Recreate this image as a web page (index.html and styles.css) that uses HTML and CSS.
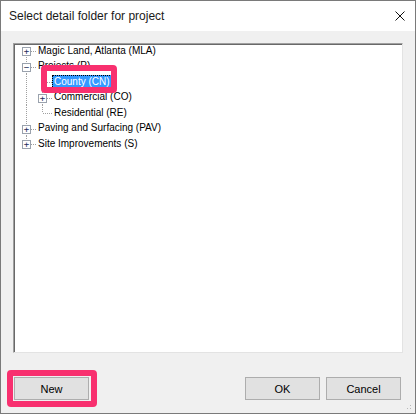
FILE: index.html
```html
<!DOCTYPE html>
<html>
<head lang="en">
    <meta charset="UTF-8">
    <title>Select detail folder for project</title>
    <link rel="stylesheet" href="styles.css">
</head>
<body>
<div class="window">
    <div class="titlebar">
        <span class="title">Select detail folder for project</span>
        <svg class="close" width="10" height="10" viewBox="0 0 10 10"><path d="M0.5 0.5L9.5 9.5M9.5 0.5L0.5 9.5" stroke="#111" stroke-width="1"/></svg>
    </div>
    <div class="content">
        <div class="tree">
            <div class="row">
                <span class="c first h"><i class="box">+</i></span>
                <span class="label">Magic Land, Atlanta (MLA)</span>
            </div>
            <div class="row">
                <span class="c h"><i class="box">&minus;</i></span>
                <span class="label">Projects (P)</span>
            </div>
            <div class="row">
                <span class="c"></span>
                <span class="c h"></span>
                <span class="label selected">County (CN)</span>
            </div>
            <div class="row">
                <span class="c"></span>
                <span class="c h"><i class="box">+</i></span>
                <span class="label">Commercial (CO)</span>
            </div>
            <div class="row">
                <span class="c"></span>
                <span class="c last h"></span>
                <span class="label">Residential (RE)</span>
            </div>
            <div class="row">
                <span class="c h"><i class="box">+</i></span>
                <span class="label">Paving and Surfacing (PAV)</span>
            </div>
            <div class="row">
                <span class="c last h"><i class="box">+</i></span>
                <span class="label">Site Improvements (S)</span>
            </div>
        </div>
        <div class="footer">
            <button class="btn">New</button>
            <div class="spacer"></div>
            <button class="btn">OK</button>
            <button class="btn">Cancel</button>
        </div>
    </div>
    <div class="grip"></div>
    <div class="mark mark-county"></div>
    <div class="mark mark-new"></div>
</div>
</body>
</html>
```

FILE: styles.css
```css
*{
    margin: 0;
    padding: 0;
    box-sizing: border-box;
}
body{
    background: #fff;
}
.window{
    position: relative;
    width: 416px;
    height: 414px;
    border: 1px solid #7a7a7a;
    background: #f0f0f0;
    font-family: "Liberation Sans", Arial, sans-serif;
    font-size: 10px;
    color: #000;
}
.titlebar{
    height: 30px;
    background: #fff;
    display: flex;
    align-items: center;
    padding: 0 10px 0 8px;
}
.title{
    flex: 1;
    font-family: "Liberation Sans", Arial, sans-serif;
    font-size: 12px;
    color: #1a1a1a;
}
.tree{
    height: 310px;
    width: 390px;
    margin: 12px 0 0 12px;
    background: #fff;
    border: 1px solid;
    border-color: #a0a0a0 #e3e3e3 #e3e3e3 #a0a0a0;
    box-shadow: inset 1px 1px 0 #696969;
    padding: 0 0 0 4px;
}
.row{
    display: flex;
    height: 15.5px;
    align-items: center;
}
.row:first-child{
    margin-top: -1px;
}
.c{
    position: relative;
    width: 16px;
    height: 100%;
    flex: none;
}
.c::before{
    content: "";
    position: absolute;
    left: 8px;
    top: 0;
    bottom: 0;
    width: 1px;
    background: linear-gradient(to bottom, #a0a0a0 50%, transparent 50%);
    background-size: 1px 2px;
}
.c.first::before{
    top: 50%;
}
.c.last::before{
    bottom: 50%;
}
.c.h::after{
    content: "";
    position: absolute;
    left: 9px;
    right: -2px;
    top: 8px;
    height: 1px;
    background: linear-gradient(to right, #a0a0a0 50%, transparent 50%);
    background-size: 2px 1px;
}
.box{
    position: absolute;
    z-index: 1;
    left: 4px;
    top: 4px;
    width: 9px;
    height: 9px;
    border: 1px solid #9aa2ad;
    background: #fff;
    font-style: normal;
    font-size: 9px;
    line-height: 6px;
    text-align: center;
    color: #1f2f5a;
    font-family: "DejaVu Sans Mono", monospace;
}
.label{
    margin-left: 2px;
    padding: 0 2px;
    height: 14px;
    line-height: 13px;
    white-space: nowrap;
}
.label.selected{
    background: #3399ff;
    color: #fff;
    outline: 1px dotted #000;
    outline-offset: -1px;
}
.footer{
    display: flex;
    gap: 6px;
    margin-top: 24px;
    padding: 0 14px 0 13px;
}
.spacer{
    flex: 1;
}
.btn{
    width: 75px;
    height: 23px;
    background: #e1e1e1;
    border: 1px solid #adadad;
    font-family: "Liberation Sans", Arial, sans-serif;
    font-size: 11px;
    color: #000;
}
.grip{
    position: absolute;
    right: 2px;
    bottom: 2px;
    width: 10px;
    height: 10px;
    background:
        radial-gradient(circle, #b8b8b8 0.9px, transparent 1px) 0 0 / 3px 3px;
    clip-path: polygon(100% 0, 100% 100%, 0 100%);
}
.mark{
    position: absolute;
    border: 6px solid #f8306f;
    border-radius: 4px;
}
.mark-county{
    left: 40px;
    top: 64px;
    width: 76px;
    height: 28px;
}
.mark-new{
    left: 6px;
    top: 369px;
    width: 90px;
    height: 37px;
}
```
